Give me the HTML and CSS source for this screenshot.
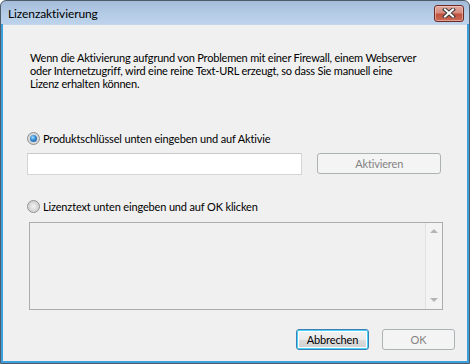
FILE: index.html
```html
<!DOCTYPE html>
<html lang="de">
<head>
    <meta charset="UTF-8">
    <title>Lizenzaktivierung</title>
    <link rel="stylesheet" href="styles.css">
</head>
<body>
    <div class="window">
        <div class="titlebar">
            <span class="title">Lizenzaktivierung</span>
            <button class="close-btn" aria-label="Schließen">
                <svg width="14" height="10" viewBox="0 0 14 10">
                    <path d="M3 1.5 L11 8.5 M11 1.5 L3 8.5" stroke="#3a3a3a" stroke-width="4" stroke-linecap="square"/>
                    <path d="M3 1.5 L11 8.5 M11 1.5 L3 8.5" stroke="#ffffff" stroke-width="2" stroke-linecap="square"/>
                </svg>
            </button>
        </div>

        <div class="client">
            <p class="intro">Wenn die Aktivierung aufgrund von Problemen mit einer Firewall, einem Webserver oder Internetzugriff, wird eine reine Text-URL erzeugt, so dass Sie manuell eine Lizenz erhalten können.</p>

            <label class="radio-row first">
                <span class="radio checked"></span>
                <span class="radio-label">Produktschlüssel unten eingeben und auf Aktivie</span>
            </label>

            <div class="key-row">
                <input type="text" class="key-input">
                <button class="btn disabled">Aktivieren</button>
            </div>

            <label class="radio-row second">
                <span class="radio"></span>
                <span class="radio-label">Lizenztext unten eingeben und auf OK klicken</span>
            </label>

            <div class="license-box">
                <div class="scrollbar">
                    <span class="arrow up"></span>
                    <span class="arrow down"></span>
                </div>
            </div>

            <div class="footer">
                <button class="btn default">Abbrechen</button>
                <button class="btn disabled">OK</button>
            </div>
        </div>
    </div>
</body>
</html>
```

FILE: styles.css
```css
* {
    margin: 0;
    padding: 0;
    box-sizing: border-box;
}

body {
    width: 470px;
    height: 364px;
    background: #ffffff;
    font-family: Lato, "Noto Sans", sans-serif;
    font-size: 11px;
    letter-spacing: -0.15px;
    color: #000000;
    overflow: hidden;
}

.window {
    width: 470px;
    height: 364px;
    border: 1px solid #4f5b69;
    border-radius: 6px 6px 0 0;
    background: linear-gradient(to bottom, #a3bcd9 0px, #b4cbe5 12px, #bdd3ec 23px, #3d9fdc 23px, #3d9fdc 100%);
    padding: 0 2px 2px 2px;
    display: flex;
    flex-direction: column;
}

.titlebar {
    height: 23px;
    display: flex;
    align-items: center;
    justify-content: space-between;
    padding: 0 3px 0 5px;
}

.title {
    font-size: 12px;
    letter-spacing: -0.1px;
    color: #000000;
    margin-top: 2px;
}

.close-btn {
    width: 30px;
    height: 17px;
    margin-top: 1px;
    border: 1px solid #6b2b25;
    border-radius: 3px;
    background: linear-gradient(to bottom, #e2a99f 0%, #d68b7f 45%, #c2513f 55%, #c96a57 100%);
    display: flex;
    align-items: center;
    justify-content: center;
    box-shadow: inset 0 0 0 1px rgba(255, 220, 210, 0.5);
}

.client {
    flex: 1;
    background: #f0f0f0;
    padding: 26px 26px 0 24px;
    display: flex;
    flex-direction: column;
    border-top: 1px solid #c7d6e7;
}

.intro {
    width: 396px;
    line-height: 13px;
    padding-left: 3px;
    letter-spacing: -0.2px;
}

.radio-row {
    display: flex;
    align-items: center;
    height: 16px;
}

.radio-row.first {
    margin-top: 40px;
}

.radio-row.second {
    margin-top: 23px;
}

.radio {
    width: 13px;
    height: 13px;
    border-radius: 50%;
    border: 1px solid #8e8f8f;
    background: radial-gradient(circle at 50% 50%, #f4f4f4 0%, #d4d4d4 60%, #e8e8e8 100%);
    margin-right: 3px;
    position: relative;
}

.radio.checked::after {
    content: "";
    position: absolute;
    left: 2px;
    top: 2px;
    width: 7px;
    height: 7px;
    border-radius: 50%;
    background: radial-gradient(circle at 40% 35%, #a9e4ff 0%, #3a8ed6 40%, #1c4f98 100%);
}

.key-row {
    display: flex;
    align-items: flex-start;
    margin-top: 7px;
}

.key-input {
    width: 276px;
    height: 22px;
    border: 1px solid #d5d5d5;
    border-top-color: #c8c8c8;
    background: #ffffff;
    outline: none;
}

.btn {
    font-family: Lato, "Noto Sans", sans-serif;
    font-size: 11px;
    letter-spacing: -0.15px;
    height: 21px;
    border-radius: 3px;
}

.key-row .btn {
    width: 124px;
    margin-left: 15px;
}

.btn.disabled {
    border: 1px solid #adb2b5;
    background: #f4f4f4;
    color: #838383;
}

.btn.default {
    border: 1px solid #3c7fb1;
    background: linear-gradient(to bottom, #f2f2f2 0%, #ebebeb 50%, #dddddd 51%, #cfcfcf 100%);
    box-shadow: inset 0 0 0 1px #48d2fb, inset 0 0 0 2px #ffffff;
    color: #000000;
}

.license-box {
    margin-top: 8px;
    margin-left: 2px;
    width: 414px;
    height: 88px;
    border: 1px solid #acacac;
    background: #f0f0f0;
    display: flex;
    justify-content: flex-end;
}

.scrollbar {
    width: 17px;
    height: 100%;
    border-left: 1px solid #e2e2e2;
    background: #f3f3f3;
    display: flex;
    flex-direction: column;
    justify-content: space-between;
    align-items: center;
    padding: 6px 0 7px;
}

.arrow {
    width: 0;
    height: 0;
    border-left: 4px solid transparent;
    border-right: 4px solid transparent;
}

.arrow.up {
    border-bottom: 4px solid #b5b5b5;
}

.arrow.down {
    border-top: 4px solid #b5b5b5;
}

.footer {
    display: flex;
    justify-content: flex-end;
    gap: 13px;
    margin-top: 19px;
    margin-right: -14px;
}

.footer .btn {
    width: 73px;
}
```
